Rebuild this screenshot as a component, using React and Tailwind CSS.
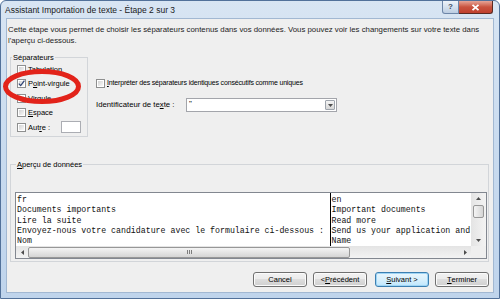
import React from 'react';

const ui = "font-['Liberation_Sans',Arial,sans-serif]";
const mono = "font-['Liberation_Mono','Courier_New',monospace]";

function Check({ checked }) {
  return (
    <span className="flex h-[9px] w-[9px] shrink-0 border border-[#8e8f8f] bg-white p-px">
      <span className="flex h-full w-full items-center justify-center bg-gradient-to-br from-[#d3d3d3] to-[#f8f8f8]">
        {checked && (
          <svg width="7" height="7" viewBox="0 0 7 7" className="overflow-visible">
            <path d="M0.8 3.6 L2.7 5.6 L6.4 0.6" fill="none" stroke="#2f4476" strokeWidth="1.3" />
          </svg>
        )}
      </span>
    </span>
  );
}

function CheckRow({ checked, children }) {
  return (
    <div className="flex h-[14.5px] items-center gap-[2px] pl-[6px]">
      <Check checked={checked} />
      <span className="leading-[9px]">{children}</span>
    </div>
  );
}

function Button({ children, focused, className = '' }) {
  return (
    <button
      className={
        'flex h-[15px] w-[54px] items-center justify-center rounded-[3px] border text-[7.5px] leading-none text-black ' +
        (focused
          ? 'border-[#3c7fb1] bg-gradient-to-b from-[#eaf6fd] via-[#d9f0fc] to-[#bee6fd] shadow-[inset_0_0_0_1px_#9fd5f5] '
          : 'border-[#707070] bg-[linear-gradient(#f2f2f2,#ebebeb_50%,#dddddd_50%,#cfcfcf)] shadow-[inset_0_0_0_1px_#fbfbfb] ') +
        className
      }
    >
      {children}
    </button>
  );
}

function Arrow({ dir }) {
  const d = {
    up: 'M0 3 L2.5 0 L5 3 Z',
    down: 'M0 0 L5 0 L2.5 3 Z',
    left: 'M3 0 L3 5 L0 2.5 Z',
    right: 'M0 0 L0 5 L3 2.5 Z',
  }[dir];
  const vertical = dir === 'up' || dir === 'down';
  return (
    <svg width={vertical ? 5 : 3} height={vertical ? 3 : 5} viewBox={vertical ? '0 0 5 3' : '0 0 3 5'}>
      <path d={d} fill="#4d4d4d" />
    </svg>
  );
}

const frLines = [
  'fr',
  'Documents importants',
  'Lire la suite',
  'Envoyez-nous votre candidature avec le formulaire ci-dessous :',
  'Nom',
];
const enLines = ['en', 'Important documents', 'Read more', 'Send us your application and', 'Name'];

export default function App() {
  return (
    <div className={`relative flex h-[299px] w-[500px] flex-col overflow-hidden rounded-t-[6px] border border-[#52719a] bg-gradient-to-b from-[#d8e5f3] via-[#c9dbef] to-[#bfd4ec] ${ui}`}>
      {/* Title bar */}
      <div className="flex h-[17px] shrink-0 items-start">
        <div className="pl-[4px] pt-[4px] text-[8.5px] leading-[10px] text-[#1a1a1a]">
          Assistant Importation de texte - Étape 2 sur 3
        </div>
        <div className="ml-auto mr-[6px] flex">
          <div className="flex h-[13px] w-[17px] items-center justify-center rounded-bl-[3px] border border-t-0 border-[#6d86a8] bg-gradient-to-b from-[#eef3f9] via-[#d5e1ee] to-[#bccde2] text-[8px] font-bold leading-none text-[#3b4a5e]">
            ?
          </div>
          <div className="flex h-[13px] w-[34px] items-center justify-center rounded-br-[3px] border border-l-0 border-t-0 border-[#5a2a22] bg-gradient-to-b from-[#e5a598] via-[#c9533f] to-[#c0402e]">
            <svg width="9" height="7" viewBox="0 0 9 7">
              <path d="M1.5 0.8 L7.5 6.2 M7.5 0.8 L1.5 6.2" stroke="#ffffff" strokeWidth="1.8" />
            </svg>
          </div>
        </div>
      </div>

      {/* Client area */}
      <div className="flex flex-1 px-[5px] pb-[5px]">
        <div className="flex flex-1 flex-col border border-[#a2b8d2] bg-[#efefef] text-[7.5px] text-black">
          <p className="whitespace-nowrap pl-[1px] pt-[5px] text-[7.8px] leading-[11px] text-[#1c1c1c]">
            Cette étape vous permet de choisir les séparateurs contenus dans vos données. Vous pouvez voir les changements sur votre texte dans
            <br />
            l'aperçu ci-dessous.
          </p>

          <div className="mt-[7px] flex">
            <fieldset className="ml-[3px] h-[84px] w-[78px] border border-[#d2d5d9] pb-px">
              <legend className="ml-[1px] px-[1px] leading-[9px]">Séparateurs</legend>
              <CheckRow>Tabulation</CheckRow>
              <CheckRow checked>
                P<u>o</u>int-virgule
              </CheckRow>
              <CheckRow>
                <u>V</u>irgule
              </CheckRow>
              <CheckRow>
                <u>E</u>space
              </CheckRow>
              <div className="flex h-[14.5px] items-center pl-[6px]">
                <Check />
                <span className="ml-[2px] leading-[9px]">
                  Aut<u>r</u>e :
                </span>
                <span className="ml-[11px] h-[12px] w-[20px] border border-[#abadb3] bg-white" />
              </div>
            </fieldset>

            <div className="ml-[8px] mt-[24px] flex flex-col">
              <div className="flex h-[12px] items-center gap-[2px]">
                <Check />
                <span className="text-[7px] tracking-[-0.17px]">
                  <u>I</u>nterpréter des séparateurs identiques consécutifs comme uniques
                </span>
              </div>
              <div className="mt-[9px] flex items-center">
                <span className="w-[90px] text-[7.75px]">
                  Identificateur de te<u>x</u>te :
                </span>
                <div className="flex h-[14px] w-[151px] border border-[#a3a5ab] bg-white">
                  <span className="flex-1 pl-[2px] text-[8px] leading-[10px]">"</span>
                  <span className="m-px flex w-[10px] items-center justify-center rounded-[1px] border border-[#9ea4ac] bg-gradient-to-b from-[#f4f4f4] to-[#d7d7d7]">
                    <Arrow dir="down" />
                  </span>
                </div>
              </div>
            </div>
          </div>

          <fieldset className="ml-[3px] mt-[23px] h-[102px] w-[479px] border border-[#d2d5d9] pl-[4px] pr-px">
            <legend className="ml-[1px] px-[1px] leading-[9px]">
              <u>A</u>perçu de données
            </legend>
            <div className="mt-[23px] flex h-[67px] flex-col border border-[#828790] bg-white">
              <div className="flex h-[53px]">
                <div className={`flex flex-1 overflow-hidden whitespace-nowrap pt-[2px] text-[8.25px] leading-[10.25px] text-[#111] ${mono}`}>
                  <div className="w-[314px] shrink-0 pl-px">
                    {frLines.map((l) => (
                      <div key={l}>{l}</div>
                    ))}
                  </div>
                  <div className="-mt-[2px] w-px shrink-0 bg-black" />
                  <div className="pl-[0.5px]">
                    {enLines.map((l) => (
                      <div key={l}>{l}</div>
                    ))}
                  </div>
                </div>
                <div className="flex w-[15px] shrink-0 flex-col items-center bg-gradient-to-r from-[#e4e4e4] to-[#f3f3f3]">
                  <div className="flex h-[11px] items-center">
                    <Arrow dir="up" />
                  </div>
                  <div className="mt-[1px] h-[13px] w-[11px] rounded-[2px] border border-[#979797] bg-gradient-to-r from-[#f4f4f4] to-[#d5d5d5]" />
                  <div className="mt-auto flex h-[11px] items-center">
                    <Arrow dir="down" />
                  </div>
                </div>
              </div>
              <div className="flex h-[12px]">
                <div className="flex flex-1 items-center bg-gradient-to-b from-[#e4e4e4] to-[#f3f3f3]">
                  <div className="flex w-[12px] justify-center">
                    <Arrow dir="left" />
                  </div>
                  <div className="flex h-[11px] w-[322px] items-center justify-center rounded-[2px] border border-[#979797] bg-gradient-to-b from-[#f4f4f4] to-[#d5d5d5]">
                    <svg width="5" height="4" viewBox="0 0 5 4">
                      <path d="M0.5 0 V4 M2.5 0 V4 M4.5 0 V4" stroke="#7d7d7d" strokeWidth="1" />
                    </svg>
                  </div>
                  <div className="ml-auto flex w-[12px] justify-center">
                    <Arrow dir="right" />
                  </div>
                </div>
                <div className="w-[15px] shrink-0 bg-[#efefef]" />
              </div>
            </div>
          </fieldset>

          <div className="mr-[4px] mt-[10px] flex justify-end">
            <Button>Cancel</Button>
            <Button className="ml-[6px]">
              &lt; <u>P</u>récédent
            </Button>
            <Button focused className="ml-[8px]">
              <u>S</u>uivant &gt;
            </Button>
            <Button className="ml-[6px]">
              <u>T</u>erminer
            </Button>
          </div>
        </div>
      </div>

      {/* Red annotation oval */}
      <svg className="absolute left-[1px] top-[67px]" width="80" height="37" viewBox="0 0 80 37">
        <ellipse cx="40" cy="18.5" rx="36.5" ry="15" fill="none" stroke="#e2231a" strokeWidth="5" />
      </svg>
    </div>
  );
}
